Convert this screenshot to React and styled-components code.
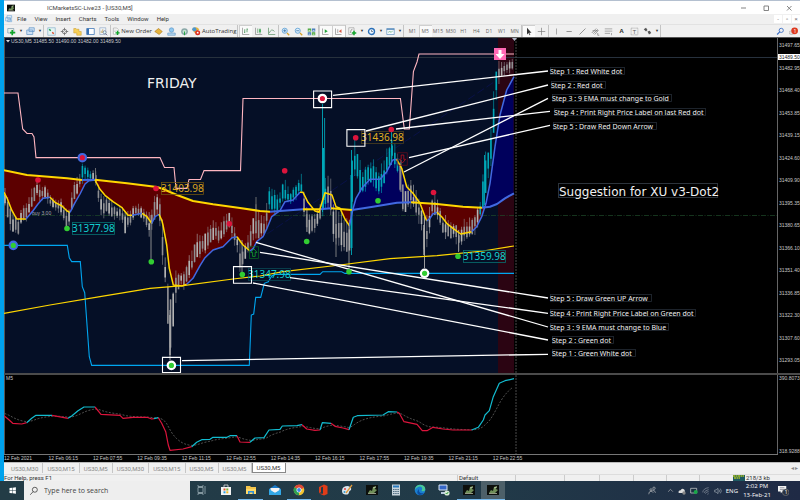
import React, { useState } from 'react';
import styled, { createGlobalStyle, css } from 'styled-components';

const GlobalStyle = createGlobalStyle`
  * { box-sizing: border-box; }
  body { margin: 0; background: #00a2ed; font-family: 'Open Sans', 'Noto Sans', sans-serif; }
  button, input { font: inherit; color: inherit; border: 0; padding: 0; margin: 0; background: none; }
  svg { display: block; }
`

const Desktop = styled.div`
  min-height: 100vh;
  display: flex;
  flex-direction: column;
`

const Terminal = styled.main`
  flex: 1;
  min-width: 0;
  margin-left: 4px;
  display: flex;
  flex-direction: column;
  background: #f0f0f0;
  color: #333;
`

const TitleBar = styled.header`
  height: 14px;
  display: flex;
  align-items: center;
  background: #fff;
  border-top: 1px solid #b4c0d0;
  padding-left: 3px;
  font: 6px/12px Roboto, sans-serif;
  color: #444;
`

const Title = styled.h1`
  flex: 1;
  margin: 0 0 0 32px;
  font: inherit;
`

const CaptionButton = styled.button`
  width: 23px;
  height: 13px;
  display: grid;
  place-items: center;
`

const MenuBar = styled.nav`
  height: 10px;
  display: flex;
  align-items: center;
  gap: 8px;
  font: 6px/10px Roboto, sans-serif;
  padding-left: 1px;

  > svg { margin-right: -4px; }
`

const ChildButtons = styled.div`
  display: flex;
  gap: 1px;
  margin-left: auto;

  button {
    width: 8px;
    height: 8px;
    background: #fff;
    line-height: 8px;
    color: #777;
  }
`

const Toolbar = styled.div`
  height: 13px;
  display: flex;
  align-items: stretch;
  border-top: 1px solid #e2e2e2;
  padding-left: 1px;
  font: 6px/12px 'Open Sans', sans-serif;
`

const Tool = styled.button`
  width: 13px;
  flex: none;
  display: grid;
  place-items: center;
  ${p => p.$pressed && css`
    background: #fafafa;
    box-shadow: inset 1px 1px #cfcfcf;
  `}
`

const WideTool = styled.button`
  width: ${p => p.$width}px;
  flex: none;
  display: flex;
  align-items: center;
  gap: 1px;
  white-space: nowrap;
`

const Caret = styled.button`
  width: 6px;
  flex: none;
  font-size: 4px;
`

const Separator = styled.span`
  width: ${p => p.$width || 1}px;
  flex: none;
  border-left: 1px solid #c4c4c4;
`

const Frames = styled.div`
  width: 115px;
  flex: none;
  display: flex;

  button {
    flex: 1;
    font-size: 5px;
    color: #666;
  }
  button[aria-pressed='true'] {
    background: #fafafa;
    box-shadow: inset 1px 1px #cfcfcf;
  }
`

const RightTools = styled.div`
  display: flex;
  margin-left: auto;
`

const ChartArea = styled.section`
  flex: 1;
  display: grid;
  grid-template-columns: 1fr 23px;
  grid-template-rows: 1fr 2px 79px 8px;
  background: #000;
  border-top: 1px solid #555;
  color: #c8c8c8;
  font: 5px/6px 'Liberation Sans', Arial, sans-serif;
`

const Plot = styled.div`
  min-width: 0;
  min-height: 0;

  svg { width: 100%; height: 100%; }
`

const Divider = styled.div`
  background: #4b4b4b;
`

const Axis = styled.div`
  position: relative;
  display: flex;
  flex-direction: column;
  justify-content: space-between;
  border-left: 1px solid #666;
  padding: ${p => p.$pad};
  overflow: hidden;
`

const CurrentPrice = styled.output`
  position: absolute;
  top: 16px;
  left: 0;
  right: 0;
  padding-left: 1px;
  background: #fff;
  color: #222;
`

const TimeAxis = styled.div`
  grid-column: 1 / -1;

  &::before {
    content: '';
    display: block;
    margin-right: 22px;
    border-top: 1px solid #777;
  }
`

const TimeLabels = styled.div`
  width: 67%;
  display: grid;
  grid-template-columns: repeat(12, 1fr);
  white-space: nowrap;
  line-height: 7px;
`

const Tabs = styled.div`
  height: 12px;
  display: flex;
  border-top: 1px solid #bbb;
  padding-left: 3px;
  font: 6px/9px Roboto, sans-serif;
`

const Tab = styled.button`
  height: 10px;
  padding: 0 4px;
  color: #888;
  border-right: 1px solid #c6c6c6;
  ${p => p.$active && css`
    background: #fff;
    color: #333;
    border: 1px solid #888;
    border-top: 0;
  `}
`

const TabArrows = styled.span`
  margin-left: auto;
  padding-right: 2px;
  color: #888;
`

const StatusBar = styled.footer`
  height: 7px;
  display: grid;
  grid-template-columns: 453px 58px 49px 35px 34px 33px 33px 1fr;
  border-top: 1px solid #ddd;
  font: 6px/6px Roboto, sans-serif;
  color: #333;

  > span { border-left: 1px solid #ccc; padding-left: 1px; white-space: nowrap; }
  > span:first-child { border: 0; padding: 0; }
`

const Traffic = styled.span`
  display: flex;
  gap: 1px;

  svg { margin-left: 32px; }
`

const Taskbar = styled.footer`
  height: 19px;
  display: flex;
  align-items: stretch;
  background: linear-gradient(90deg, #233c46, #213a48 60%, #1f2a45);
  color: #fff;
`

const Start = styled.button`
  width: 24px;
  display: grid;
  place-items: center;
`

const Search = styled.label`
  width: 166px;
  display: flex;
  align-items: center;
  gap: 5px;
  padding-left: 5px;
  background: #eeeeee;
  color: #333;

  input {
    flex: 1;
    min-width: 0;
    font-size: 7px;
    outline: 0;
  }
  input::placeholder { color: #444; opacity: 1; }
`

const Apps = styled.div`
  display: grid;
  grid-template-columns: repeat(13, 1fr);
  width: 315px;
`

const AppButton = styled.button`
  display: grid;
  place-items: center;
  background: ${p => p.$active ? '#4d6069' : 'none'};
  border-bottom: 1px solid ${p => p.$running ? '#76b9ed' : 'transparent'};
`

const Tray = styled.div`
  margin-left: auto;
  display: flex;
  align-items: center;
  gap: 4px;
  font: 6px/10px 'Open Sans', sans-serif;

  > svg:first-child { margin-right: 6px; }
`

const Clock = styled.time`
  width: 30px;
  text-align: center;
  line-height: 9px;
`

const Notices = styled.button`
  width: 24px;
  display: grid;
  place-items: center start;
  padding-left: 2px;
`

/* ---------- chart data ---------- */

const GOLD = '#ffd700'
const BLUE = '#4169e1'
const RED = '#dc143c'
const LIME = '#32cd32'
const CYAN = '#00a8b8'
const TEAL = '#12bcd0'

const parse = str => str.trim().split(/\s+/).map(p => p.split(',').map(Number))

const slowMa = [
  [GOLD, '4,170.3 27,175 67,178.3 82,180'],
  [BLUE, '82,180 95,179.7'],
  [GOLD, '95,179.7 127,183.3 157,187 163,189 177,195 193,201 213,204.3 240,208 260,211 270,211.7'],
  [BLUE, '270,211.7 303,209.3'],
  [GOLD, '303,209.3 320,209.3'],
  [BLUE, '320,209.3 331,208.3'],
  [GOLD, '331,208.3 352,210'],
  [BLUE, '352,210 373,206.7 397,202.7 411,202.3'],
  [GOLD, '411,202.3 437,204 463,206.7 482,207.7'],
  [BLUE, '482,207.7 490,206.7 497,204 505,198.3 514,193.3'],
]

const fastMa = [
  [GOLD, '4,192.3 7,198 12,210.7 16.7,219 26,219'],
  [BLUE, '26,219 33,210.7 38,204 43,198.3 50,197.3'],
  [GOLD, '50,197.3 55,202.3 62,206 67,211 70,212.3'],
  [BLUE, '70,212.3 75,202.7 80,194 85,184 89,180.7 95,180'],
  [GOLD, '95,180 100,189.3 105,195.3 113,201.7 122,207.7 128,215.3 132,215.3'],
  [BLUE, '132,215.3 142,213.3'],
  [GOLD, '142,213.3 147,216.7 151.7,223.3'],
  [BLUE, '151.7,223.3 155,216.7 159,214.3'],
  [GOLD, '159,214.3 161.7,220 163,225 166.7,245 169.3,268.3 173.3,285 182,286 186.7,284.3'],
  [BLUE, '186.7,284.3 193,278.3 200,265.7 205,257.7 213,250 223,246.7 232,237.7 237,236.7'],
  [GOLD, '237,236.7 243,245 250,251'],
  [BLUE, '250,251 253.3,248.3 256.7,241.7 263,236.7 267,228.3 271.7,216.7 280,210.7 285,201.7 293,200 300,192.3'],
  [GOLD, '300,192.3 303,192.3 308,202.3 315,211 319,212.3 322.7,200 325,192.7 332,195 336,206.7 340,208.3 345,219.3 349.5,225.7'],
  [BLUE, '349.5,225.7 352.7,210 356,198.3 361.7,188.3 370,179.3 380,179.3 386.7,171.7 392.7,160 396.7,159.3'],
  [GOLD, '396.7,159.3 401.7,168.3 406.7,186.7 413,193.3 420,203.3 426.7,221'],
  [BLUE, '426.7,221 430,218.3 432.7,214 437,212.3'],
  [GOLD, '437,212.3 441.7,216.7 446.7,223.3 453,228.3 460.7,234 471.7,231.7'],
  [BLUE, '471.7,231.7 476.7,226.7 481.7,216.7 486,203.3 490,183.3 495,146.7 500,115 506.7,90 514,76.7'],
]

const momentum = [
  [RED, '4,415.7 8.3,419.3 12.7,423.3 21.7,424 26.7,422.7'],
  [TEAL, '26.7,422.7 31.7,418.3 36,415.3 52,415.3'],
  [RED, '52,415.3 68,418.3'],
  [TEAL, '68,418.3 71.7,416 78,410.7 84,407 95,407'],
  [RED, '95,407 101,414.3 120,415.3 123,418.3 133,417.3 147,417.3 151.7,419 154,418.7'],
  [TEAL, '154,418.7 158.3,417.7'],
  [RED, '158.3,417.7 161.7,423.3 165.7,431.7 168.3,445 170,450.3 183,449 191.7,446.7'],
  [TEAL, '191.7,446.7 196.7,442.3 201.7,439.7 210,439.3 213,437.3 227,437.3 230,435.7 237,435.7'],
  [RED, '237,435.7 240,442 250,442.3'],
  [TEAL, '250,442.3 255,438 264,437.7 269,430 280,429.3 282.3,426 297,425.7 302,424.7'],
  [RED, '302,424.7 306.7,429 315,430.3 320,430'],
  [TEAL, '320,430 322.3,422.7 331,423.3'],
  [RED, '331,423.3 335,426.3 343,428 349,429.7'],
  [TEAL, '349,429.7 353.3,417.3 357.3,415.7 383,415 388.3,411.7 397,412'],
  [RED, '397,412 399.3,413.3 404,421.7 417,424.3 422.3,430.7 427,430.7 433,427.3 443,429 453,430 471.7,430'],
  [TEAL, '471.7,430 478.3,427.3 483.3,420 485,415 489.3,410.7 493.3,396.7 499.3,383.3 505,380.7 514,378.7'],
]

// x, high, low
const envelope = [
  [5, 190, 206], [9, 200, 225], [14, 208, 238], [18, 219, 235], [22, 206, 220], [27, 204, 219], [31, 192, 208],
  [35, 183, 200], [38, 178, 193], [41, 189, 204], [44, 180, 196], [50, 195, 205], [56, 199, 210], [61, 199, 213],
  [66, 211, 227], [69, 205, 226], [74, 180, 200], [79, 177, 190], [83, 160, 181], [86, 165, 177], [90, 173, 180],
  [95, 167, 182], [98, 184, 199], [102, 199, 218], [107, 195, 212], [112, 202, 217], [118, 208, 217],
  [122, 203, 222], [125, 209, 234], [129, 210, 226], [135, 205, 214], [140, 205, 217], [145, 210, 224],
  [149, 214, 236], [153, 200, 225], [157, 188, 212], [160, 196, 225], [163, 215, 270], [166, 260, 292],
  [169, 275, 350], [172, 300, 356], [174, 274, 312], [177, 268, 294], [181, 270, 284], [184, 271, 290],
  [188, 260, 279], [192, 250, 272], [196, 236, 260], [201, 232, 254], [206, 229, 253], [211, 220, 243],
  [215, 216, 240], [220, 224, 242], [225, 215, 238], [229, 209, 226], [233, 223, 240], [237, 233, 247],
  [240, 240, 272], [244, 246, 262], [249, 233, 250], [255, 204, 236], [260, 213, 240], [265, 218, 236],
  [268, 190, 222], [270, 178, 205], [274, 190, 214], [279, 195, 208], [284, 174, 203], [290, 192, 205],
  [296, 184, 199], [301, 172, 192], [304, 190, 217], [308, 211, 236], [315, 214, 230], [320, 202, 220],
  [325, 175, 208], [331, 178, 215], [334, 205, 246], [339, 206, 250], [345, 218, 252], [350, 215, 254],
  [352, 150, 210], [355, 138, 172], [359, 155, 195], [364, 168, 194], [370, 155, 184], [375, 164, 188],
  [379, 170, 195], [384, 160, 185], [388, 145, 172], [392, 135, 158], [396, 146, 168], [400, 158, 192],
  [404, 188, 220], [410, 180, 206], [416, 189, 215], [421, 204, 226], [424, 218, 256], [428, 216, 242],
  [432, 195, 213], [438, 199, 218], [443, 214, 234], [449, 220, 240], [455, 221, 239], [459, 224, 250],
  [464, 220, 239], [470, 219, 238], [475, 212, 232], [481, 197, 215], [484, 152, 205], [488, 150, 178],
  [491, 125, 165], [494, 85, 130], [497, 56, 90], [500, 60, 78], [504, 62, 73], [510, 60, 72], [514, 55, 66],
]

const spikes = [
  [151, 215, 261, '#999'], [170, 310, 360, '#aaa'], [256, 197, 230, '#777'], [322.5, 104, 212, CYAN],
  [324.6, 118, 200, CYAN], [351.5, 150, 255, CYAN], [349, 225, 270, '#999'], [242, 240, 272, '#999'],
  [424.5, 215, 268, '#aaa'], [307, 210, 232, '#888'], [336, 210, 257, '#888'], [95.5, 168, 182, '#777'],
  [458.5, 230, 252, '#999'], [391.5, 131, 165, CYAN], [484.5, 155, 205, CYAN], [401, 160, 192, '#888'],
]

const risingSpans = [[81, 93], [269, 302], [321, 326], [351, 398], [480, 498]]

const valueAt = (points, x, k = 1) => {
  const i = Math.max(1, points.findIndex(p => p[0] >= x))
  const a = points[i - 1]
  const b = points[i]
  const t = b[0] === a[0] ? 0 : (x - a[0]) / (b[0] - a[0])
  return a[k] + (b[k] - a[k]) * t
}

const noise = n => {
  const v = Math.sin(n * 127.1) * 43758.5453
  return v - Math.floor(v)
}

const flat = segments => segments.flatMap(s => parse(s[1]))

const candles = Array.from({ length: 191 }, (_, i) => {
  const x = 5 + i * 2.67
  const high = valueAt(envelope, x, 1)
  const low = valueAt(envelope, x, 2)
  const range = low - high
  return {
    x,
    high: high + range * noise(i) * 0.35 - 2,
    low: low - range * noise(i + 400) * 0.3 + 3,
    top: high + range * (0.15 + noise(i + 90) * 0.35),
    bottom: low - range * noise(i + 700) * 0.3,
    color: risingSpans.some(([a, b]) => x > a && x < b) ? CYAN : i % 3 ? '#8f8f92' : '#b4b4b4',
  }
})

const ribbon = pick => {
  const slow = flat(slowMa)
  const fast = flat(fastMa)
  const xs = Array.from({ length: 510 }, (_, i) => 4.5 + i)
  const there = xs.map(x => `${x},${pick(valueAt(slow, x), valueAt(fast, x))}`)
  const back = xs.slice().reverse().map(x => `${x},${valueAt(slow, x)}`)
  return there.concat(back).join(' ')
}

const signal = (() => {
  const points = flat(momentum)
  let y = 413
  return Array.from({ length: 255 }, (_, i) => {
    const x = 4.5 + i * 2
    y += (valueAt(points, x) - y) * 0.16
    return `${x},${y}`
  }).join(' ')
})()

const dots = [
  [38, 180, RED], [156, 188.5, RED], [229.3, 223.8, RED], [284.7, 170.7, RED], [355.7, 137.7, RED],
  [391.3, 129.5, RED], [433.5, 192.5, RED], [67, 228.5, LIME], [151.3, 261.7, LIME], [242.3, 274.6, LIME],
  [306.7, 241.5, LIME], [349, 271.8, LIME], [378, 200.7, LIME], [458, 256.3, LIME],
  [82.3, 157.7, RED, BLUE], [13.3, 245.4, LIME, BLUE], [322.4, 98.5, RED, '#fff'],
  [171.4, 365.4, LIME, '#fff'], [424.6, 273.3, LIME, '#fff'],
]

const priceTags = [
  [161, 182.5, '31403.98', '#d9a520', '#6b5210'],
  [361, 131.5, '31436.98', '#e0b020', '#4c4020'],
  [72, 222.5, '31377.98', '#12d0d0', '#087070'],
  [463, 250.5, '31359.98', '#12d0d0', '#087070'],
  [248, 268.5, '31347.98', '#12d0d0', '#0a4a55'],
]

const pointers = [
  '333,95.3 548,71', '366,131 548,85', '404,172 548,98.3', '396,129 550,111.3', '409,157.7 550,125.3',
  '260,252.3 548,298', '290,277.7 548,313.3', '256,242.3 548,327', '253,283 548,340', '182,360.7 548,354.3',
]

const notes = [
  [550, 71, 74, 'Step 1 : Red White dot'],
  [551, 85, 54, 'Step 2 : Red dot'],
  [552, 98, 119, 'Step 3 : 9 EMA must change to Gold'],
  [554, 112, 151, 'Step 4 : Print Right Price Label on last Red dot'],
  [553, 126, 103, 'Step 5 : Draw Red Down Arrow'],
  [550, 298, 101, 'Step 5 : Draw Green UP Arrow'],
  [550, 313, 145, 'Step 4 : Print Right Price Label on Green dot'],
  [550, 327, 118, 'Step 3 : 9 EMA must change to Blue'],
  [552, 340, 61, 'Step 2 : Green dot'],
  [552, 353, 83, 'Step 1 : Green White dot'],
]

const prices = ['31497.65', '31482.95', '31468.40', '31453.85', '31439.15', '31424.60', '31409.90', '31395.35',
  '31380.65', '31366.10', '31351.40', '31336.85', '31322.30', '31307.60', '31293.05']
const times = ['2021', '06:15', '07:55', '09:35', '11:15', '12:55', '14:35', '16:15', '17:55', '19:35', '21:15', '22:55']

const Lines = ({ segments, width }) => segments.map(([color, points], i) => (
  <polyline key={i} points={points} fill="none" stroke={color} strokeWidth={width} strokeLinejoin="round" />
))

const PriceChart = () => (
  <svg viewBox="4 38 773 335" role="img" aria-label="US30 five minute chart">
    <rect x="4" y="38" width="494" height="335" fill="#050f26" />
    <rect x="498" y="38" width="16" height="335" fill="#2b0412" />
    <path d="M4.5 38v335" stroke="#555" />
    <path d="M5 57.5h772" stroke="#27313d" />
    <path d="M5 215.5h772" stroke="#1e4a2a" strokeWidth=".7" strokeDasharray="5 1.5 1 1.5" />
    <path d="M258 240L497 80" stroke="#0a1250" strokeWidth=".8" strokeDasharray="8 3" />
    <path d="M516 38v335" stroke="#4a4a4a" strokeDasharray="2 1" />
    <path d="M512 38h5l-2.5 3z" fill="#b0b8c8" />
    <polygon points={ribbon(Math.max)} fill="#5c0000" />
    <polygon points={ribbon(Math.min)} fill="#00005c" />
    {candles.map(c => (
      <g key={c.x} stroke={c.color}>
        <path d={`M${c.x} ${c.high}V${c.low}`} strokeWidth=".6" />
        <path d={`M${c.x} ${c.top}V${c.bottom}`} strokeWidth="1.6" />
      </g>
    ))}
    {spikes.map(([x, a, b, color]) => (
      <path key={x} d={`M${x} ${a}V${b}`} stroke={color} strokeWidth=".9" />
    ))}
    <path d="M170 315v40M424 225v30" stroke="#aaa" strokeWidth="1.4" />
    <path d="M323 148v62M351.5 175v73" stroke={CYAN} strokeWidth="2" />
    <text x="32" y="215" fontSize="5" fill="#aaa">buy 3.00</text>
    <polyline
      points="4,93 18,93 22.7,129 27,133.5 32,133.5 34,137 36,157.6 160,157.6 164.5,167.5 174,167.5 176,188.4 187,188.4 189,179.5 200.5,179.5 204,170.6 240.5,170.6 243,98.5 400.4,98.5 404.3,129 409.3,129 413.4,71.6 417,62 419,54 514,54"
      fill="none" stroke="#ffb6c1" strokeWidth="1.1" />
    <polyline
      points="4,245.4 67.3,245.4 69.3,257.7 71.7,261.6 80.3,261.6 82.3,286.7 84.7,292.7 89.3,356.7 91.7,365.4 249.3,365.4 251.3,315 253.7,314 255.7,297.4 260.7,297.4 264.3,283.3 268.3,281.7 271.7,276 275,274.4 320,274.4 322.7,271.7 341.7,271.7 345,273.4 514,273.4"
      fill="none" stroke="#00a6f0" strokeWidth="1.1" />
    <polyline
      points="4,313.3 50,305 100,296.7 150,288.3 183,285.7 233,279 260,276 283,271.7 340,265 390,258.7 437,255.7 483,251 514,246"
      fill="none" stroke={GOLD} strokeWidth="1.2" />
    <Lines segments={slowMa} width="2.1" />
    <Lines segments={fastMa} width="1.5" />
    {priceTags.map(([x, y, label, color, edge]) => (
      <g key={label}>
        <rect x={x + 0.5} y={y} width="42" height="12" fill="none" stroke={edge} strokeWidth=".8" />
        <text x={x} y={y + 9.7} fontSize="10" fontFamily="'Noto Sans', sans-serif" fill={color}>{label}</text>
      </g>
    ))}
    <g fill="none">
      <rect x="397.8" y="152.8" width="9.4" height="12.4" stroke="#6b0c1c" strokeWidth=".7" />
      <path d="M401.2 155h2.6v4.3h1.8l-3.1 3.6-3.1-3.6h1.8z" stroke="#c0101e" strokeWidth=".8" />
      <rect x="249.5" y="246.8" width="9" height="11.6" stroke="#0b6a20" strokeWidth=".7" />
      <path d="M252.6 256.4v-4h-1.8l3.1-3.6 3.1 3.6h-1.8v4z" stroke="#12a52c" strokeWidth=".8" />
      <path d="M313.6 91h18v16.6h-18zM346.9 129.6h18v16.6h-18zM233.5 266.6h18v16.6h-18zM162.5 357.4h18v15.2h-18z" stroke="#fff" strokeWidth="1.1" />
    </g>
    {pointers.map(p => <polyline key={p} points={p} stroke="#fff" strokeWidth="1.3" />)}
    {dots.map(([x, y, color, ring]) => (
      <circle key={x} cx={x} cy={y} r={ring ? 3.7 : 2.8} fill={color} stroke={ring} strokeWidth={ring ? 2.2 : 0} />
    ))}
    <rect x="494" y="48" width="12" height="12" fill="#ff69b4" />
    <path d="M498.5 50h3v4h3l-4.5 5-4.500-5h3z" fill="#fff" />
    <path d="M6 40h4l-2 2.500z" fill="#ddd" />
    <text x="11" y="43.4" fontSize="5" fill="#ccc">US30,M5 31485.50 31490.00 31482.00 31489.50</text>
    <g fontFamily="'DejaVu Sans', Verdana, sans-serif" fill="#f0f0f0">
      <text x="147" y="88" fontSize="14">FRIDAY</text>
      <rect x="558.5" y="183.5" width="159" height="14" fill="none" stroke="#2c333b" />
      <text x="559" y="195.500" fontSize="12">Suggestion for XU v3-Dot2</text>
    </g>
    <g fontFamily="'Noto Sans', sans-serif" fontSize="7" fill="#f0f0f0">
      {notes.map(([x, y, width, text]) => (
        <g key={text}>
          <rect x={x + 0.5} y={y - 3.5} width={width} height="7" fill="none" stroke="#252c36" strokeWidth=".8" />
          <text x={x} y={y + 2.5}>{text}</text>
        </g>
      ))}
    </g>
  </svg>
)

const MomentumChart = () => (
  <svg viewBox="4 375 773 79" role="img" aria-label="Momentum indicator">
    <path d="M4.5 375v79" stroke="#555" />
    <path d="M516 375v79" stroke="#4a4a4a" strokeDasharray="2 1" />
    <text x="6" y="380" fontSize="5" fill="#ccc">M5</text>
    <polyline points={signal} fill="none" stroke="#666" strokeWidth=".8" strokeDasharray="2 1.500" />
    <Lines segments={momentum} width="1.2" />
  </svg>
)

/* ---------- icons ---------- */

const glyphs = {
  newChart: <><path d="M1 2h8v6H1z" fill="#e8f0e8" stroke="#5a7a9a" strokeWidth=".7" /><path d="M7 4v7M4 7.500h7" stroke="#10a52a" strokeWidth="2.200" /></>,
  profiles: <path d="M4 1h7v5H4zM1 4h8v6H1z" fill="#cfe2f5" stroke="#5b8fc4" strokeWidth=".9" />,
  watch: <><path d="M1 1h10v10H1z" fill="#e6f4f4" stroke="#68a0c0" strokeWidth=".7" /><path d="M3 3l2 2" stroke="#16a34a" strokeWidth="2" /><path d="M7 7l2 2" stroke="#e05030" strokeWidth="2" /></>,
  target: <><circle cx="6" cy="6" r="3" fill="none" stroke="#666" /><path d="M6 1v4M6 7v4M1 6h4M7 6h4" stroke="#666" /></>,
  folders: <path d="M1 2h3l1 1h3v3h3v5H5V8H1z" fill="#f6cf57" stroke="#c39222" strokeWidth=".6" />,
  panel: <><path d="M1 2h10v8H1z" fill="#fff" stroke="#3a73b4" /><path d="M1 2h3v8H1z" fill="#3a73b4" /></>,
  tester: <><path d="M1 1h8v9H1z" fill="#eef3fa" stroke="#7893b5" strokeWidth=".7" /><path d="M3 8V5M5 8V3" stroke="#c0a050" /><circle cx="7.500" cy="7" r="2" fill="#dff" stroke="#557" strokeWidth=".8" /><path d="M9 9l2 2" stroke="#557" /></>,
  order: <><path d="M2 1h5l2 2v7H2z" fill="#fff" stroke="#888" strokeWidth=".7" /><path d="M3 4h4M3 6h3" stroke="#999" strokeWidth=".6" /><path d="M8 5v6M5 8h6" stroke="#10a52a" strokeWidth="2" /></>,
  book: <path d="M1 6l5-4 5 4-4 4z" fill="#e7b43c" stroke="#a8761a" strokeWidth=".8" />,
  vps: <><circle cx="6" cy="4" r="3" fill="#8fc7ef" stroke="#4b89bd" strokeWidth=".7" /><path d="M1 8h10v3H1z" fill="#b6d7ef" stroke="#4b89bd" strokeWidth=".7" /></>,
  globe: <><circle cx="6" cy="6" r="4.500" fill="#8aa8a8" /><circle cx="6" cy="6" r="2.500" fill="#c5e2d0" /><path d="M6 6v5" stroke="#18a038" strokeWidth="1.200" /></>,
  auto: <><path d="M1 4q5-5 9 0l-5 5z" fill="#e7b43c" /><circle cx="4" cy="4" r="2.500" fill="#4c97cf" /><circle cx="8" cy="8" r="3" fill="#dc2b1d" /><path d="M7 7h2v2H7z" fill="#fff" /></>,
  bars: <><path d="M2 1v9h9" fill="none" stroke="#777" strokeWidth=".8" /><path d="M5 3v5M4 7h1M8 2v5M8 3h1" stroke="#3b8d4e" /></>,
  candles: <><path d="M2 1v9h9" fill="none" stroke="#777" strokeWidth=".8" /><path d="M5 2v6M8 2v7" stroke="#3b8d4e" strokeWidth=".8" /><path d="M7 3h2v4H7z" fill="#2fa84c" /></>,
  line: <path d="M2 1v9h9M3 8q3-7 7-2" fill="none" stroke="#538d5e" strokeWidth=".9" />,
  zoomIn: <><circle cx="5" cy="5" r="3.400" fill="#dff0fc" stroke="#4e95cf" /><path d="M5 3v4M3 5h4" stroke="#2c6aa6" /><path d="M8 8l3 3" stroke="#d6a028" strokeWidth="1.600" /></>,
  zoomOut: <><circle cx="5" cy="5" r="3.400" fill="#dff0fc" stroke="#4e95cf" /><path d="M3 5h4" stroke="#2c6aa6" /><path d="M8 8l3 3" stroke="#d6a028" strokeWidth="1.600" /></>,
  tile: <><path d="M1 2h4.500v4H1zM6.500 7H11v4H6.500z" fill="#4ba83e" /><path d="M6.500 2H11v4H6.500zM1 7h4.500v4H1z" fill="#4079b8" /><path d="M2 4.500h2.500M7.500 4.500H10M2 9.500h2.500M7.500 9.500H10" stroke="#fff" /></>,
  scroll: <><path d="M2 2v8h8" fill="none" stroke="#777" strokeWidth=".8" /><path d="M5 3l4 2.500-4 2.500z" fill="#23a33a" /></>,
  shift: <><path d="M2 2v8h8M5 3v5" fill="none" stroke="#777" strokeWidth=".8" /><path d="M10 3L6.500 5.500 10 8z" fill="#d65a45" /></>,
  indicators: <><path d="M1 1h7v9H1z" fill="#f5f5f5" stroke="#888" strokeWidth=".7" /><path d="M3 8q1-6 3-5" fill="none" stroke="#666" strokeWidth=".8" /><path d="M8 5v6M5 8h6" stroke="#10a52a" strokeWidth="2" /></>,
  clock: <><circle cx="6" cy="6" r="4" fill="#eef6ff" stroke="#2b70b8" strokeWidth="1.800" /><path d="M6 4v2h2" fill="none" stroke="#345" strokeWidth=".8" /></>,
  template: <><path d="M1 2h10v8H1z" fill="#f6faff" stroke="#4d84b8" strokeWidth=".8" /><path d="M1 3h10" stroke="#4d84b8" strokeWidth="1.500" /><path d="M3 7l2-1 2 1 2-2" fill="none" stroke="#3a9a50" strokeWidth=".8" /></>,
  cursor: <path d="M4 1v9l2-2 1.500 3 1-.5L7 7.500h3z" fill="#333" />,
  cross: <path d="M6 1v10M1 6h10" stroke="#777" strokeWidth=".9" />,
  vline: <path d="M6 2v8" stroke="#888" strokeWidth=".9" />,
  hline: <path d="M2 6h7" stroke="#777" />,
  trend: <path d="M2 10l8-8" stroke="#777" />,
  channel: <path d="M1 8l6-6M3 9l6-6M5 10l5-6M2 5h7M9 8v3h2" fill="none" stroke="#666" strokeWidth=".8" />,
  fibo: <path d="M1 2.500h10M1 5.500h10M1 8.500h7M10 8v3" stroke="#888" strokeWidth=".9" />,
  label: <><path d="M1.500 1.500h9v9h-9z" fill="none" stroke="#888" strokeWidth=".8" strokeDasharray="1 .6" /><text x="3.800" y="9" fontSize="8" fill="#555">T</text></>,
  arrows: <path d="M1 3l3-2 2 3-2 2zM6 6l3-1 2 3-3 2zM5 5l3 3" fill="#555" />,
  search: <><circle cx="7" cy="4.500" r="2.800" fill="none" stroke="#3d6fc4" strokeWidth="1.200" /><path d="M5 6.500L1.500 10" stroke="#3d6fc4" strokeWidth="1.600" /></>,
  bell: <><ellipse cx="3.500" cy="7.500" rx="3.500" ry="2.500" fill="#ddd" stroke="#999" strokeWidth=".6" /><circle cx="7.500" cy="5" r="4.500" fill="#dd3a20" /><text x="6" y="7.400" fontSize="7" fill="#fff">1</text></>,
  charts: <path d="M3 1h7v4H3zM1 4h7v5H1zM4 7h6v3H4z" fill="#e5f1fb" stroke="#5793ca" strokeWidth=".8" />,
  mt4: <><path d="M0 1h12v10H0z" fill="#0c0f0c" /><path d="M2 9l2-3 2 1 1-4 3-1-1 3 2 1-3 3z" fill="#6f8f58" /><path d="M2 9.500h8M7 4l3-1" stroke="#cdd6b8" strokeWidth=".7" /></>,
  windows: <path d="M2 2.800l3.600-.5v3.400H2zM6.200 2.200L10.500 1.600v4.100H6.200zM2 6.300h3.600v3.400L2 9.200zM6.200 6.300h4.300v4.100l-4.300-.6z" fill="#fff" />,
  glass: <><circle cx="7" cy="4.500" r="3" fill="none" stroke="#333" strokeWidth=".9" /><path d="M5 6.700L1.500 10.500" stroke="#333" strokeWidth=".9" /></>,
  taskview: <path d="M2 3.500h5v5H2zM9 2v8M2 1v1.500h5V1M2 11V9.500h5V11" fill="none" stroke="#8da0a8" strokeWidth=".9" />,
  store: <><path d="M1 3h10v8H1z" fill="#f3f3f3" /><path d="M4 3V1h4v2" fill="none" stroke="#ddd" strokeWidth=".8" /><path d="M3.500 4.500h2v2h-2z" fill="#e2522b" /><path d="M6.300 4.500h2v2h-2z" fill="#7ab32a" /><path d="M3.500 7.300h2v2h-2z" fill="#2a9fe0" /><path d="M6.300 7.300h2v2h-2z" fill="#f3b81f" /></>,
  explorer: <><path d="M1 2h4l1 1h5v7H1z" fill="#f3c54b" /><path d="M1 5h10v5H1z" fill="#ffd968" /><path d="M3 7h6v3H7.500V8.500h-3V10H3z" fill="#2f8fd8" /></>,
  mail: <><path d="M0 5l6-4 6 4v6H0z" fill="#1678c8" /><path d="M1.500 4h9v3L6 9 1.500 7z" fill="#f4f4f4" /><path d="M0 5l6 4 6-4v6H0z" fill="#32a8e8" /></>,
  chrome: <><circle cx="6" cy="6" r="5.300" fill="#f2c230" /><path d="M6 6L1.400 3.300A5.300 5.300 0 0111 4z" fill="#dc4a38" /><path d="M6 6L1.400 3.300A5.300 5.300 0 006 11.300z" fill="#2ca052" /><circle cx="6" cy="6" r="2.500" fill="#fff" /><circle cx="6" cy="6" r="1.900" fill="#3d83e8" /></>,
  office: <path d="M2 3l5-2.500L10.500 2v8L7 11.500 2 9.500l4 .3V2.800L4 3.500v4.800L2 9z" fill="#e03c18" />,
  paint: <><path d="M1 7q0-5 6-5 4 1 3 4-2 1-2 2 0 3-4 2.500Q1 10 1 7z" fill="#dbe6ee" /><circle cx="4" cy="5" r="1" fill="#d44" /><circle cx="3.500" cy="8" r="1" fill="#39c" /><path d="M5 9l6-8" stroke="#e09a3a" strokeWidth="1.300" /></>,
  calculator: <><path d="M2 .5h8v11H2z" fill="#c8d4dc" /><path d="M3 1.500h6v2H3z" fill="#2b7cc0" /><path d="M3 5.500h6M3 7.500h6M3 9.500h6" stroke="#4f6d82" strokeDasharray="1.500 .7" /></>,
  edge: <><circle cx="6" cy="6" r="5.300" fill="#1b7fd0" /><path d="M.8 6Q1.500.7 6.500.7q5 .5 4.800 5Q10.500 8 7.500 7q2-4-1.500-4.500Q3 2.500.8 6z" fill="#48c998" /><path d="M5 5q-1 5 5 4-2 2.500-5 2Q1.500 8.500 5 5z" fill="#0b4ca0" /></>,
  remote: <><path d="M1 1h8v5H1z" fill="#3567c8" stroke="#d8e4f2" /><path d="M3 8h5v2H3z" fill="#b8c8dc" /><circle cx="9" cy="9" r="2.600" fill="#d8ead4" /><path d="M7.700 9l1 1 1.600-2" fill="none" stroke="#2b9b35" /></>,
  people: <><circle cx="8" cy="3" r="1.600" fill="none" stroke="#ccc" strokeWidth=".8" /><circle cx="4" cy="5" r="1.400" fill="none" stroke="#ccc" strokeWidth=".8" /><path d="M1 11q0-4 3-4 2 0 3 2M6 6q3-1 4 3" fill="none" stroke="#ccc" strokeWidth=".8" /></>,
  chevron: <path d="M2 8l4-4 4 4" fill="none" stroke="#ccc" />,
  cloud: <><path d="M1 9q-1-4 3-4 1-3 4-2 3 1 2 6z" fill="#ddd" /><circle cx="9" cy="9" r="2.500" fill="#888" /></>,
  meet: <><path d="M1 2h9v7H1z" fill="#1b3040" stroke="#ddd" /><circle cx="8.500" cy="7.500" r="3" fill="#18a848" /></>,
  wifi: <path d="M1 8Q2 2 10 1M3 9q1-4 7-5M5 10q1-3 5-3M8 11l2-1" fill="none" stroke="#a8b0ba" strokeWidth=".8" />,
  speaker: <path d="M1 4.500h2L6 2v8L3 7.500H1zM7.500 4q1.500 2 0 4M9.500 2.500q3 3.500 0 7" fill="none" stroke="#b8c0c8" strokeWidth=".8" />,
  notice: <><path d="M0 1h9v6H5l-2 2V7H0z" fill="#f2f2f2" /><path d="M2 3h5M2 5h4" stroke="#667" strokeWidth=".7" /><circle cx="8.400" cy="8" r="3.600" fill="#29303c" stroke="#999" strokeWidth=".5" /><text x="7" y="10.200" fontSize="6" fill="#fff">1</text></>,
  minimize: <path d="M4 6h5" stroke="#777" strokeWidth=".9" />,
  maximize: <path d="M4 4h4.500v4.500H4z" fill="none" stroke="#777" strokeWidth=".9" />,
  close: <path d="M4 4l4.500 4.500M8.500 4L4 8.500" stroke="#777" strokeWidth=".9" />,
}

const Icon = ({ name, size = 9 }) => (
  <svg width={size} height={size} viewBox="0 0 12 12" aria-hidden="true">{glyphs[name]}</svg>
)

const Tools = ({ names, pressed = [] }) => names.map(name => (
  <Tool key={name} aria-label={name} $pressed={pressed.includes(name)}><Icon name={name} /></Tool>
))

const ToolMenu = ({ name }) => (
  <>
    <Tools names={[name]} />
    <Caret aria-label={`${name} options`}>▼</Caret>
  </>
)

const tabs = ['US30,M30', 'US30,M15', 'US30,M5', 'US30,M30', 'US30,M15', 'US30,M5', 'US30,M5', 'US30,M5']
const apps = ['taskview', 'store', 'explorer', 'mail', 'chrome', 'office', 'paint', 'mt4', 'calculator', 'edge', 'remote', 'mt4', 'mt4']
const running = [2, 4, 11, 12]

const App = () => {
  const [frame, setFrame] = useState('M5')
  const [tab, setTab] = useState(7)

  return (
    <Desktop>
      <GlobalStyle />
      <Terminal>
        <TitleBar>
          <Icon name="mt4" size={8} />
          <Title>ICMarketsSC-Live23 - [US30,M5]</Title>
          {['minimize', 'maximize', 'close'].map(name => (
            <CaptionButton key={name} aria-label={name}><Icon name={name} size={12} /></CaptionButton>
          ))}
        </TitleBar>
        <MenuBar>
          <Icon name="charts" size={8} />
          {['File', 'View', 'Insert', 'Charts', 'Tools', 'Window', 'Help'].map(m => <button key={m}>{m}</button>)}
          <ChildButtons>
            <button aria-label="Minimize chart">-</button>
            <button aria-label="Restore chart">▫</button>
            <button aria-label="Close chart">×</button>
          </ChildButtons>
        </MenuBar>
        <Toolbar>
          <ToolMenu name="newChart" />
          <ToolMenu name="profiles" />
          <Separator $width={2} />
          <Tools names={['watch', 'target', 'folders', 'panel', 'tester']} />
          <Separator $width={2} />
          <WideTool $width={40}><Icon name="order" />New Order</WideTool>
          <Tools names={['book', 'vps', 'globe']} />
          <WideTool $width={46}><Icon name="auto" size={10} />AutoTrading</WideTool>
          <Separator $width={2} />
          <Tools names={['bars', 'candles', 'line']} pressed={['bars']} />
          <Separator />
          <Tools names={['zoomIn', 'zoomOut', 'tile']} />
          <Separator />
          <Tools names={['scroll', 'shift']} pressed={['scroll', 'shift']} />
          <Separator />
          <ToolMenu name="indicators" />
          <ToolMenu name="clock" />
          <ToolMenu name="template" />
          <Separator $width={3} />
          <Frames>
            {['M1', 'M5', 'M15', 'M30', 'H1', 'H4', 'D1', 'W1', 'MN'].map(f => (
              <button key={f} aria-pressed={f === frame} onClick={() => setFrame(f)}>{f}</button>
            ))}
          </Frames>
          <Separator />
          <Tools names={['cursor', 'cross']} pressed={['cursor']} />
          <Separator $width={2} />
          <Tools names={['vline', 'hline', 'trend', 'channel', 'fibo']} />
          <Tool><b>A</b></Tool>
          <Tools names={['label']} />
          <ToolMenu name="arrows" />
          <Separator />
          <RightTools>
            <Tools names={['search', 'bell']} />
          </RightTools>
        </Toolbar>
        <ChartArea>
          <Plot><PriceChart /></Plot>
          <Axis $pad="4px 0 10px 1px">
            {prices.map(p => <span key={p}>{p}</span>)}
            <CurrentPrice>31489.50</CurrentPrice>
          </Axis>
          <Divider />
          <Divider />
          <Plot><MomentumChart /></Plot>
          <Axis $pad="0 0 0 1px">
            <span>390.8073</span>
            <span>318.9288</span>
          </Axis>
          <TimeAxis>
            <TimeLabels>
              {times.map(t => <span key={t}>12 Feb {t}</span>)}
            </TimeLabels>
          </TimeAxis>
        </ChartArea>
        <Tabs>
          {tabs.map((t, i) => <Tab key={i} $active={i === tab} onClick={() => setTab(i)}>{t}</Tab>)}
          <TabArrows>◂ ▸</TabArrows>
        </Tabs>
        <StatusBar>
          <span>For Help, press F1</span>
          <span>Default</span>
          <span /><span /><span /><span /><span />
          <Traffic>
            <svg width="12" height="6" aria-hidden="true">
              <path d="M0 0h12v6H0z" fill="#1e5a62" />
              <path d="M0 1h11M1 3h6" stroke="#8aa832" strokeWidth="2" strokeDasharray="2 .5" />
            </svg>
            218/3 kb
          </Traffic>
        </StatusBar>
      </Terminal>
      <Taskbar>
        <Start aria-label="Start"><Icon name="windows" size={9} /></Start>
        <Search>
          <Icon name="glass" size={10} />
          <input aria-label="Search" placeholder="Type here to search" />
        </Search>
        <Apps>
          {apps.map((name, i) => (
            <AppButton key={i} aria-label={name} $running={running.includes(i)} $active={i === 12}>
              <Icon name={name} size={12} />
            </AppButton>
          ))}
        </Apps>
        <Tray>
          <Icon name="people" size={9} />
          <Icon name="chevron" size={7} />
          <Icon name="cloud" size={8} />
          <Icon name="meet" size={8} />
          <Icon name="wifi" size={8} />
          <Icon name="speaker" size={8} />
          ENG
          <Clock>2:02 PM<br />13-Feb-21</Clock>
          <Notices aria-label="Notifications"><Icon name="notice" size={11} /></Notices>
        </Tray>
      </Taskbar>
    </Desktop>
  )
}

export default App;
